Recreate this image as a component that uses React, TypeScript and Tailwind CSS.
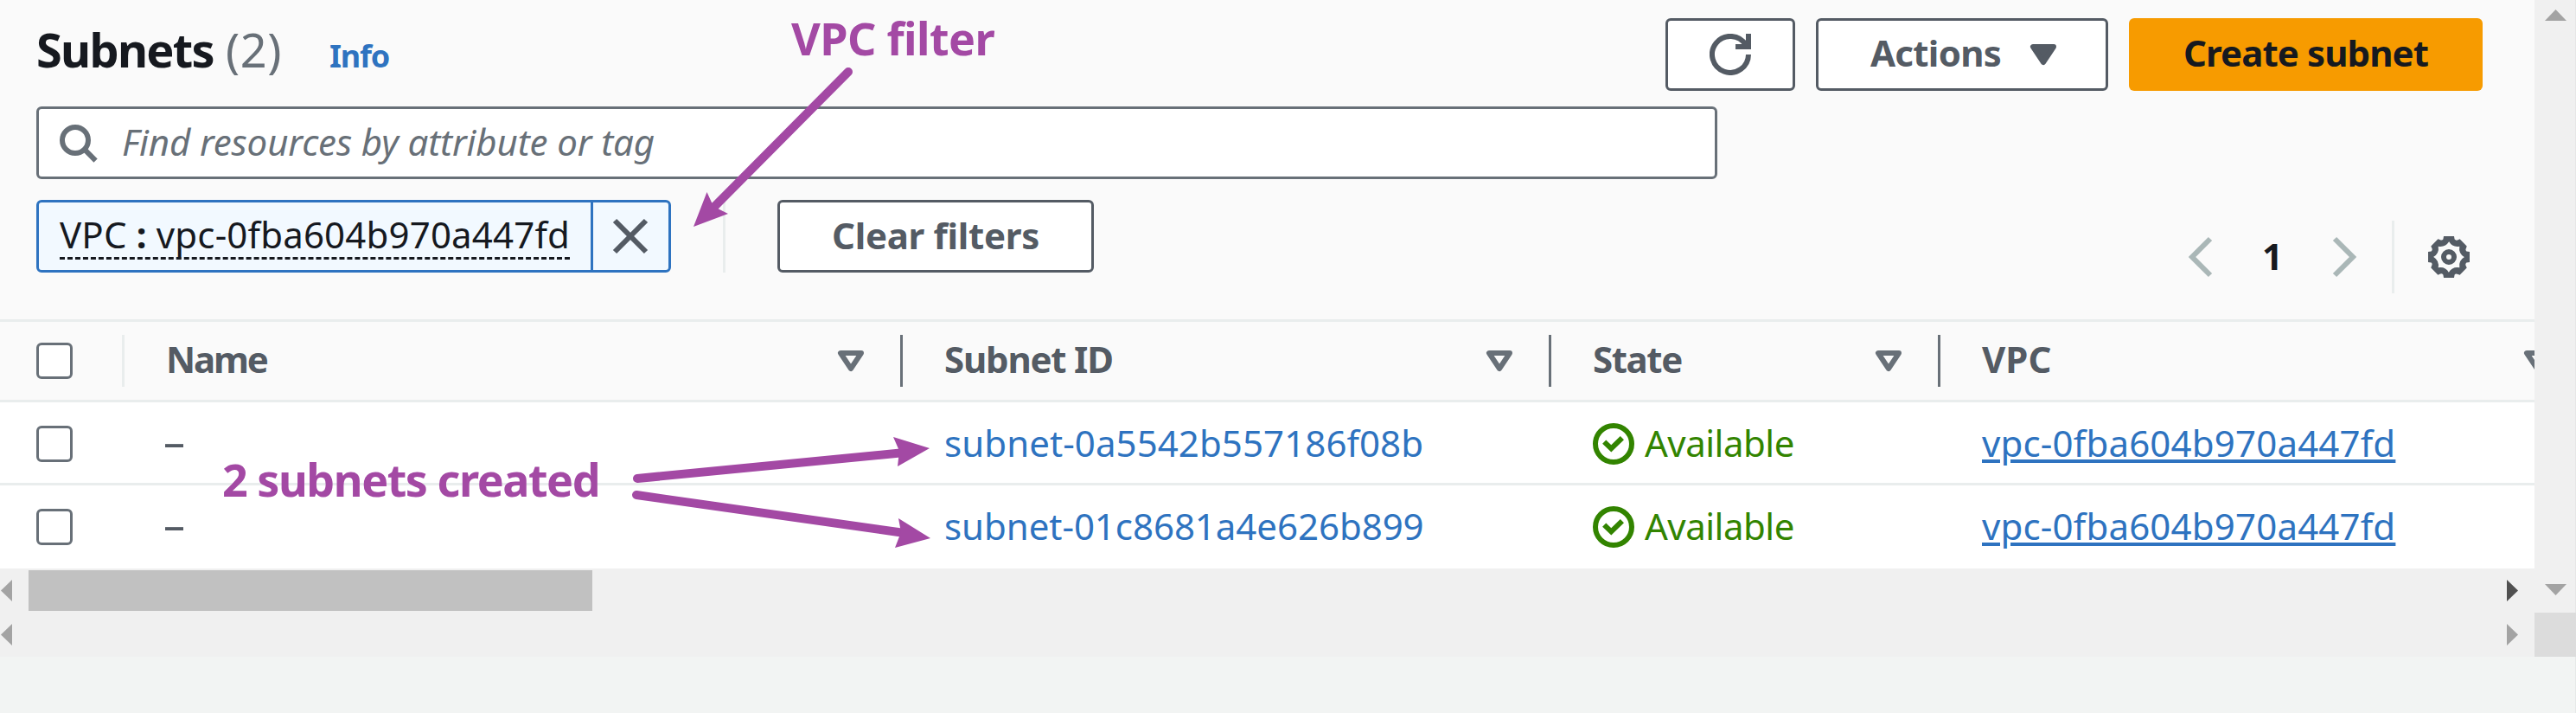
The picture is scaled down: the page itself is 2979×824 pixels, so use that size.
import type { ReactNode } from "react";

type IconProps = { children: ReactNode; className?: string };

function Icon({ children, className = "" }: IconProps) {
  return (
    <svg viewBox="0 0 16 16" className={`size-12 shrink-0 ${className}`} fill="none" stroke="currentColor" strokeWidth="2">
      {children}
    </svg>
  );
}

const SearchIcon = () => (
  <Icon className="text-[#687078]">
    <circle cx="7" cy="7" r="5" />
    <path d="M10.4 10.4l4.45 4.45" />
  </Icon>
);

const RefreshIcon = () => (
  <Icon>
    <path d="M15 8a7 7 0 1 1-1.1-3.8" />
    <path d="M10 5h5V0" />
  </Icon>
);

const CloseIcon = () => (
  <Icon className="text-[#545b64]">
    <path d="M2 2l12 12M14 2L2 14" />
  </Icon>
);

const CaretFilled = () => (
  <Icon>
    <path d="M4 5h8l-4 6-4-6z" fill="currentColor" strokeLinejoin="round" />
  </Icon>
);

const CaretOutline = () => (
  <Icon className="text-[#687078]">
    <path d="M4 5h8l-4 6-4-6z" strokeLinejoin="round" />
  </Icon>
);

const CheckCircle = () => (
  <Icon>
    <circle cx="8" cy="8" r="7" />
    <path d="M4.4 7.2l2.7 2.6 4.2-4.1" />
  </Icon>
);

function GearIcon() {
  const quarter = (
    <path
      stroke="none"
      fill="currentColor"
      d="M7.9 0H10L10.2 1.2Q10.8 1.9 11.7 1.3L12.2 1.1L14.9 3.8L14.7 4.5Q14.2 5.3 14.8 5.8L16 6V8.1H14Q11.6 6.6 12.1 3.9Q9.4 4.4 8 2H7.9Z"
    />
  );
  return (
    <Icon className="text-[#545b64]">
      {quarter}
      <g transform="rotate(90 8 8)">{quarter}</g>
      <g transform="rotate(180 8 8)">{quarter}</g>
      <g transform="rotate(270 8 8)">{quarter}</g>
      <circle cx="8" cy="8" r="2" />
    </Icon>
  );
}

function Checkbox() {
  return <span className="size-[42px] shrink-0 rounded-[6px] border-[3px] border-[#687078] bg-white" />;
}

function HeaderCell({ label, className, text }: { label: string; className: string; text: string }) {
  return (
    <div className={`flex h-[90px] shrink-0 items-center justify-between pr-[33px] pl-12 ${className}`}>
      <span className={`pb-[4px] font-bold text-[#545b64] ${text}`}>{label}</span>
      <CaretOutline />
    </div>
  );
}

function Divider({ className }: { className: string }) {
  return <span className={`w-[3px] shrink-0 ${className}`} />;
}

function Row({ subnet, spacing, last = false }: { subnet: string; spacing: string; last?: boolean }) {
  return (
    <div className={`flex h-24 items-center bg-white ${last ? "" : "shadow-[inset_0_-3px_0_#e9eded]"}`}>
      <div className="flex w-[189px] shrink-0 pl-[42px]">
        <Checkbox />
      </div>
      <span className="w-[903px] shrink-0 pb-[8px] text-[50px] text-[#545b64]">–</span>
      <a className={`w-[750px] shrink-0 pb-[3px] text-[#2e73c0] ${spacing}`}>{subnet}</a>
      <span className="flex w-[450px] shrink-0 items-center gap-3 text-[#328400]">
        <CheckCircle />
        <span className="pb-[3px] tracking-[-0.5px]">Available</span>
      </span>
      <a className="pb-[3px] tracking-[0.18px] text-[#2e73c0] underline decoration-[4px] underline-offset-[3px]">
        vpc-0fba604b970a447fd
      </a>
    </div>
  );
}

function Arrow({ dir, className }: { dir: "left" | "right" | "up" | "down"; className: string }) {
  const wide = dir === "up" || dir === "down";
  const points = {
    left: "13,0 13,25 0,12.5",
    right: "0,0 0,25 13,12.5",
    up: "0,13 25,13 12.5,0",
    down: "0,0 25,0 12.5,13",
  }[dir];
  return (
    <svg viewBox={wide ? "0 0 25 13" : "0 0 13 25"} className={`shrink-0 ${wide ? "h-[13px] w-[25px]" : "h-[25px] w-[13px]"} ${className}`}>
      <polygon points={points} fill="currentColor" />
    </svg>
  );
}

export default function App() {
  return (
    <div className="relative flex h-[824px] w-[2979px] flex-col overflow-hidden bg-[#f2f4f3] font-['Noto_Sans','Open_Sans',sans-serif] text-[42px] leading-[60px] whitespace-nowrap">
      <div className="flex h-[759px] shrink-0">
        <main className="flex w-[2931px] shrink-0 flex-col overflow-hidden bg-[#fafafa]">
          <section className="flex h-[369px] shrink-0 flex-col pt-[21px] pr-[60px] pl-[42px]">
            <div className="flex h-[84px] shrink-0 justify-between">
              <h1 className="flex items-baseline text-[54px] leading-[72px]">
                <span className="w-[219px] font-bold tracking-[-1.7px] text-[#16191f]">Subnets</span>
                <span className="w-[120px] tracking-[0.6px] text-[#687078]">(2)</span>
                <a className="text-[36px] font-bold tracking-[-1.2px] text-[#2e73c0]">Info</a>
              </h1>
              <div className="flex font-bold text-[#545b64]">
                <button className="flex w-[150px] items-center justify-center rounded-[6px] border-[3px] border-[#545b64] bg-white">
                  <RefreshIcon />
                </button>
                <button className="ml-6 flex w-[338px] items-center justify-between rounded-[6px] border-[3px] border-[#545b64] bg-white pr-12 pl-[60px]">
                  <span className="pb-[4px] tracking-[-0.7px]">Actions</span>
                  <CaretFilled />
                </button>
                <button className="ml-6 flex w-[409px] items-center justify-center rounded-[6px] bg-[#f79b00] text-[#16191f]">
                  <span className="pb-[4px] tracking-[-0.9px]">Create subnet</span>
                </button>
              </div>
            </div>

            <div className="mt-[18px] flex h-[84px] w-[1944px] shrink-0 items-center gap-[27px] rounded-[6px] border-[3px] border-[#687078] bg-white pl-[21px]">
              <SearchIcon />
              <span className="pb-[2px] tracking-[-0.1px] text-[#687078] italic">Find resources by attribute or tag</span>
            </div>

            <div className="mt-6 flex items-start">
              <div className="flex h-[84px] w-[734px] rounded-[6px] border-[3px] border-[#2e73c0] bg-[#f2f9ff]">
                <div className="flex-1 pt-[8px] pl-6">
                  <div className="h-[58px] w-[590px] border-b-[3px] border-dashed border-[#16191f] leading-[57px] tracking-[0.17px] text-[#16191f]">
                    VPC <b>:</b> vpc-0fba604b970a447fd
                  </div>
                </div>
                <button className="flex w-[90px] items-center justify-center border-l-[3px] border-[#2e73c0] pr-px">
                  <CloseIcon />
                </button>
              </div>
              <Divider className="ml-[60px] h-[84px] bg-[#e9eded]" />
              <button className="ml-[60px] flex h-[84px] w-[366px] items-center justify-center rounded-[6px] border-[3px] border-[#545b64] bg-white font-bold text-[#545b64]">
                <span className="pb-[3px] tracking-[-0.3px]">Clear filters</span>
              </button>
              <div className="mt-6 mr-[15px] ml-auto flex h-[84px] items-center">
                <Icon className="text-[#aab7b7]">
                  <path d="M11 1L4 8l7 7" />
                </Icon>
                <span className="w-[114px] pb-[3px] text-center font-bold text-[#16191f]">1</span>
                <Icon className="text-[#aab7b7]">
                  <path d="M5 1l7 7-7 7" />
                </Icon>
                <Divider className="ml-[33px] h-[84px] bg-[#e9eded]" />
                <div className="ml-[39px]">
                  <GearIcon />
                </div>
              </div>
            </div>
          </section>

          <section className="flex h-[288px] shrink-0 flex-col">
            <div className="flex h-24 shrink-0 items-center border-y-[3px] border-[#e9eded]">
              <div className="flex w-[141px] shrink-0 pl-[42px]">
                <Checkbox />
              </div>
              <Divider className="h-[60px] bg-[#e9eded]" />
              <HeaderCell label="Name" className="w-[897px]" text="tracking-[-2.2px]" />
              <Divider className="h-[60px] bg-[#687078]" />
              <HeaderCell label="Subnet ID" className="w-[747px]" text="tracking-[-1.2px]" />
              <Divider className="h-[60px] bg-[#687078]" />
              <HeaderCell label="State" className="w-[447px]" text="tracking-[-1.4px]" />
              <Divider className="h-[60px] bg-[#687078]" />
              <HeaderCell label="VPC" className="w-[747px]" text="tracking-[0px]" />
            </div>
            <Row subnet="subnet-0a5542b557186f08b" spacing="tracking-[0.08px]" />
            <Row subnet="subnet-01c8681a4e626b899" spacing="tracking-[-0.05px]" last />
          </section>

          <div className="flex h-[51px] shrink-0 items-center bg-[#f0f0f0] pr-[19px] pl-px">
            <Arrow dir="left" className="text-[#a3a3a3]" />
            <span className="ml-[19px] h-[47px] w-[652px] bg-[#c1c1c1]" />
            <Arrow dir="right" className="ml-auto text-[#505050]" />
          </div>
          <div className="flex h-[51px] shrink-0 items-center justify-between bg-[#f0f0f0] pr-[19px] pl-px">
            <Arrow dir="left" className="text-[#a3a3a3]" />
            <Arrow dir="right" className="text-[#a3a3a3]" />
          </div>
        </main>

        <aside className="flex w-12 shrink-0 flex-col">
          <div className="flex h-[708px] flex-col items-center justify-between border-r border-[#e6e6e6] bg-[#f0f0f0] pt-[11px] pb-[20px] pl-[2px]">
            <Arrow dir="up" className="text-[#a3a3a3]" />
            <Arrow dir="down" className="text-[#a3a3a3]" />
          </div>
          <div className="h-[51px] bg-[#dcdcdc]" />
        </aside>
      </div>
      <div className="flex-1 border-r border-[#e6e9e8]" />

      <svg viewBox="0 0 2979 824" className="pointer-events-none absolute inset-0 h-[824px] w-[2979px] text-[#a349a4]" fill="currentColor" stroke="none">
        <path d="M981 83L824 241M737 553L1046 523M736 572L1046 616" stroke="currentColor" strokeWidth="10" strokeLinecap="round" />
        <path d="M802 262L817.5 222L823 234L830 241L842 247Z" />
        <path d="M1075 518L1033 505L1040 521L1038 539Z" />
        <path d="M1076 622L1039 599L1042 615L1035 633Z" />
      </svg>
      <span className="absolute top-[8px] left-[915px] text-[52px] leading-[72px] font-bold tracking-[-0.6px] text-[#a349a4]">VPC filter</span>
      <span className="absolute top-[518px] left-[257px] text-[52px] leading-[72px] font-bold tracking-[-1.45px] text-[#a349a4]">2 subnets created</span>
    </div>
  );
}
